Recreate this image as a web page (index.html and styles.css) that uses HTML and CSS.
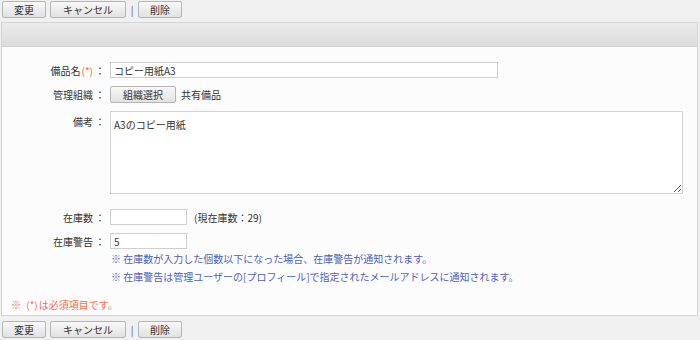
FILE: index.html
```html
<!DOCTYPE html>
<html lang="ja">
<head>
<meta charset="utf-8">
<link rel="stylesheet" href="styles.css">
</head>
<body>
<div class="toolbar">
  <button class="btn btn-s">変更</button>
  <button class="btn btn-l">キャンセル</button>
  <span class="sep">|</span>
  <button class="btn btn-s">削除</button>
</div>
<div class="panel">
  <div class="panel-head"></div>
  <div class="panel-body">
    <div class="form">
      <div class="label">備品名<span class="req">(*)</span><span class="colon">：</span></div>
      <div class="field"><input class="text wide" type="text" value="コピー用紙A3"></div>

      <div class="label">管理組織<span class="colon">：</span></div>
      <div class="field"><button class="btn btn-org">組織選択</button><span class="org">共有備品</span></div>

      <div class="label lab-top">備考<span class="colon">：</span></div>
      <div class="field field-area"><textarea class="area">A3のコピー用紙</textarea></div>

      <div class="label">在庫数<span class="colon">：</span></div>
      <div class="field"><input class="text short" type="text" value=""><span class="cur">(現在庫数：29)</span></div>

      <div class="label">在庫警告<span class="colon">：</span></div>
      <div class="field"><input class="text short" type="text" value="5"></div>

      <div></div>
      <div class="notes">
        <p>※ 在庫数が入力した個数以下になった場合、在庫警告が通知されます。</p>
        <p>※ 在庫警告は管理ユーザーの[プロフィール]で指定されたメールアドレスに通知されます。</p>
      </div>
    </div>
    <p class="required">※ <span class="star">(*)</span>は必須項目です。</p>
  </div>
</div>
<div class="toolbar">
  <button class="btn btn-s">変更</button>
  <button class="btn btn-l">キャンセル</button>
  <span class="sep">|</span>
  <button class="btn btn-s">削除</button>
</div>
</body>
</html>
```
FILE: styles.css
```css
html, body {
  margin: 0;
  padding: 0;
  background: #f0f0f0;
  font-family: "Noto Sans CJK JP", "Noto Sans", sans-serif;
  font-size: 10px;
  color: #333;
}
.toolbar {
  display: flex;
  align-items: center;
  height: 17px;
  padding: 1px 2px;
}
.btn {
  font-family: inherit;
  font-size: 10px;
  color: #333;
  height: 17px;
  padding: 0;
  border: 1px solid #b5b5b5;
  border-radius: 2px;
  background: linear-gradient(#f8f8f8, #e2e2e2);
  line-height: 15px;
}
.btn-s { width: 44px; }
.btn-l { width: 76px; margin-left: 4px; }
.sep {
  color: #555;
  width: 12px;
  text-align: center;
}
.panel {
  margin: 3px 2px 4px 1px;
  border: 1px solid #d3d3d3;
  background: #fcfcfc;
  height: 294px;
  box-sizing: border-box;
  display: flex;
  flex-direction: column;
}
.panel-head {
  height: 23px;
  background: linear-gradient(#ebebeb, #dcdcdc);
  border-bottom: 1px solid #cfcfcf;
}
.panel-body {
  padding: 15px 0 0 0;
}
.form {
  display: grid;
  grid-template-columns: 108px 1fr;
  row-gap: 8px;
  align-items: center;
}
.label {
  text-align: right;
  padding-right: 4px;
  white-space: nowrap;
}
.lab-top { align-self: start; padding-top: 3px; }
.req { color: #ee6644; margin-left: 1px; }
.colon { display: inline-block; width: 12px; text-align: center; margin-left: 1px; }
.field {
  display: flex;
  align-items: center;
}
.field-area { margin-bottom: 7px; }
.text {
  font-family: inherit;
  font-size: 10px;
  color: #333;
  height: 16px;
  box-sizing: border-box;
  border: 1px solid #cfcfcf;
  background: #fff;
  padding: 0 3px;
  outline: none;
  margin: 0;
}
.wide { width: 388px; }
.short { width: 77px; }
.btn-org { width: 66px; height: 17px; }
.org { margin-left: 5px; }
.cur { margin-left: 7px; }
.area {
  font-family: inherit;
  font-size: 10px;
  color: #333;
  width: 573px;
  height: 83px;
  box-sizing: border-box;
  border: 1px solid #d3d3d3;
  background: #fff;
  padding: 5px 3px;
  margin: 0;
  display: block;
  resize: both;
}
.notes {
  margin-top: -7px;
  padding-left: 1px;
  color: #4e5fba;
}
.notes p {
  margin: 0;
  line-height: 18px;
}
.required {
  margin: 10px 0 0 9px;
  line-height: 18px;
  color: #f0704e;
}
.star { margin-left: 3px; margin-right: 1px; }
```
